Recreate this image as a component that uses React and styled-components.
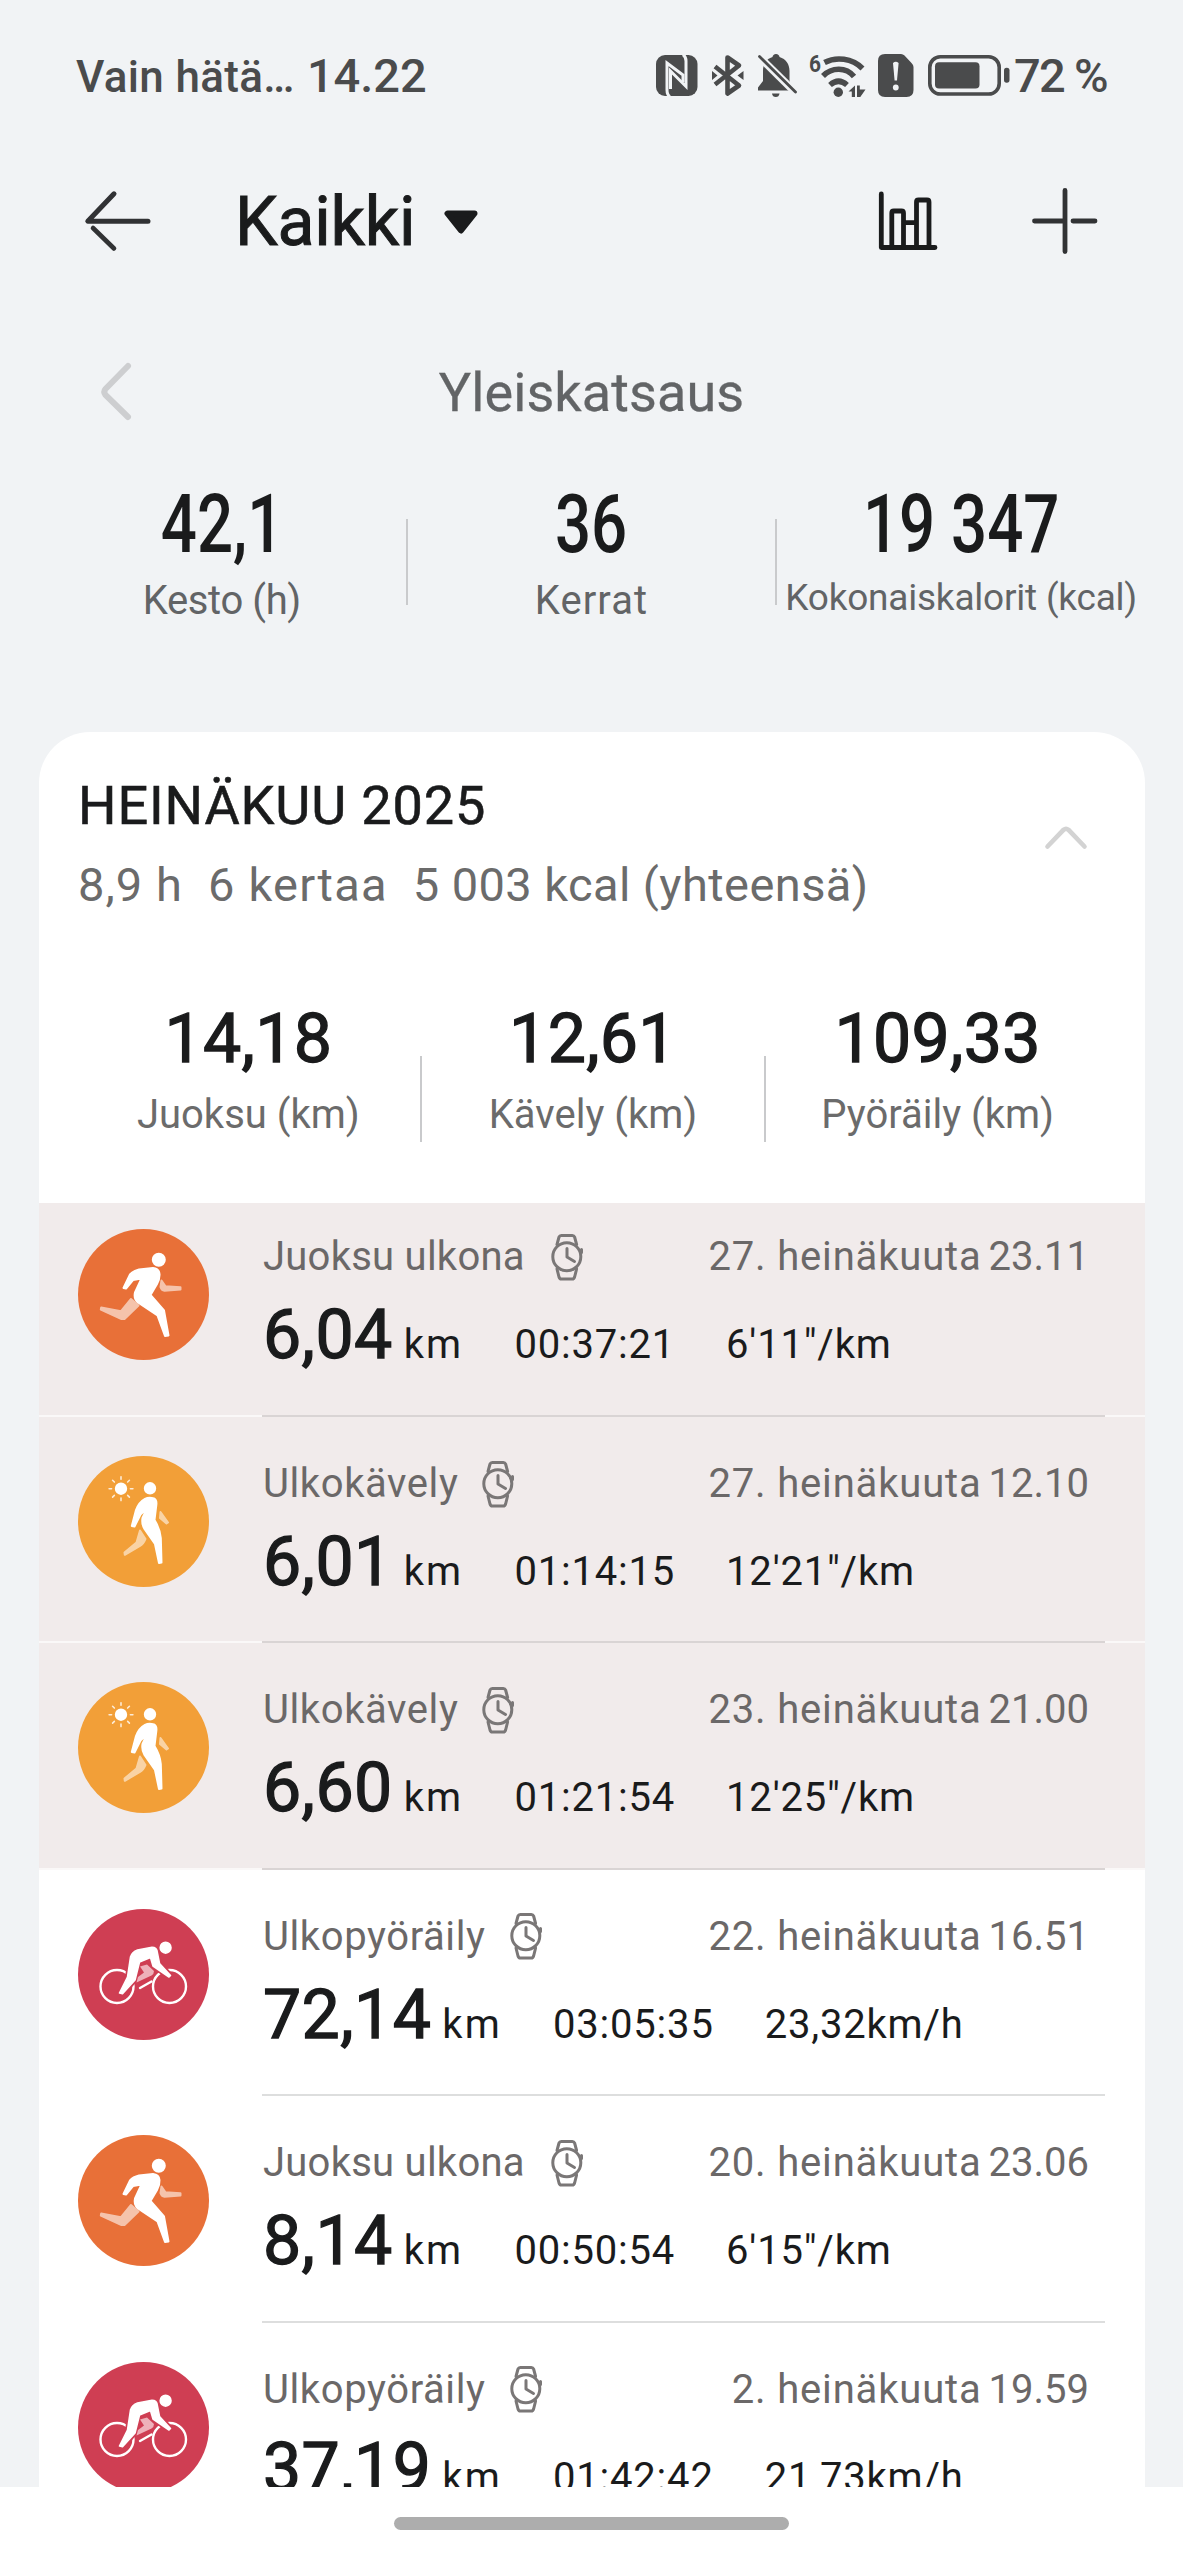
import React from 'react';
import styled, { createGlobalStyle } from 'styled-components';

const GlobalStyle = createGlobalStyle`
  * {
    box-sizing: border-box;
  }
  body {
    margin: 0;
    background: #f1f3f5;
    font-family: Roboto, 'Liberation Sans', sans-serif;
    color: #1a1b1c;
  }
  svg {
    display: block;
    flex-shrink: 0;
    overflow: visible;
  }
`;

const Screen = styled.div`
  width: 1183px;
  height: 2560px;
  display: flex;
  flex-direction: column;
  overflow: hidden;
`;

const Content = styled.main`
  height: 2487px;
  flex-shrink: 0;
  overflow: hidden;
`;

const StatusBar = styled.div`
  height: 151px;
  display: flex;
  align-items: center;
  padding-left: 76px;
  color: #4a4b4c;
  font-weight: 500;
`;

const Carrier = styled.div`
  width: 580px;
  display: flex;
  align-items: baseline;
  gap: 12px;
  font-size: 44px;
  letter-spacing: 0.34px;
`;

const Clock = styled.span`
  font-size: 47px;
  letter-spacing: 0;
`;

const StatusIcons = styled.div`
  display: flex;
  align-items: center;
  gap: 14px;
`;

const BatteryText = styled.span`
  margin-left: -9px;
  font-size: 47px;
  letter-spacing: -1.7px;
  white-space: nowrap;
`;

const AppBar = styled.header`
  height: 139px;
  display: flex;
  align-items: center;
  padding: 0 85px;
`;

const FilterTitle = styled.h1`
  margin: 2px 0 0 84px;
  display: flex;
  align-items: center;
  gap: 29px;
  font-size: 68px;
  font-weight: 400;
  letter-spacing: -0.2px;
  -webkit-text-stroke: 1px currentColor;
`;

const Actions = styled.div`
  margin-left: auto;
  display: flex;
  align-items: center;
  gap: 95px;
`;

const OverviewBar = styled.div`
  height: 204px;
  display: grid;
  grid-template-columns: 1fr auto 1fr;
  align-items: center;
  padding: 0 101px;
  color: #626466;
  font-size: 54px;
  letter-spacing: 0.08px;
  -webkit-text-stroke: 0.3px currentColor;
`;

const Totals = styled.section`
  height: 238px;
  padding: 0 38px;
  display: grid;
  grid-template-columns: 1fr 2px 1fr 2px 1fr;
`;

const Total = styled.div`
  display: flex;
  flex-direction: column;
  align-items: center;
  white-space: nowrap;
`;

const TotalValue = styled.div`
  font-size: 81px;
  font-weight: 500;
  line-height: 62px;
  transform: scaleX(0.785);
`;

const TotalLabel = styled.div`
  margin-top: ${(p) => (p.$compact ? 20 : 23)}px;
  font-size: ${(p) => (p.$compact ? 37 : 40)}px;
  letter-spacing: ${(p) => p.$spacing}px;
  line-height: 44px;
  color: #626466;
`;

const Divider = styled.div`
  height: 86px;
  margin-top: ${(p) => p.$offset}px;
  background: #c9cacc;
`;

const Card = styled.section`
  margin: 0 38px 0 39px;
  border-radius: 51px 51px 0 0;
  background: #fff;
  overflow: hidden;
`;

const CardHead = styled.div`
  display: flex;
  align-items: center;
  justify-content: space-between;
  padding: 42px 58px 0 39px;
`;

const Month = styled.h2`
  margin: 0;
  font-size: 54px;
  font-weight: 400;
  line-height: 64px;
  letter-spacing: 0.88px;
  -webkit-text-stroke: 0.6px currentColor;
`;

const MonthTotals = styled.div`
  margin-top: 17px;
  display: flex;
  gap: 25px;
  font-size: 47px;
  line-height: 60px;
  color: #6b6b6b;
`;

const MonthTotal = styled.span`
  letter-spacing: ${(p) => p.$spacing}px;
`;

const CollapseIcon = styled.svg`
  margin-bottom: 14px;
`;

const Distances = styled.div`
  height: 288px;
  padding: 86px 36px 0 38px;
  display: grid;
  grid-template-columns: 1fr 2px 1fr 2px 1fr;
`;

const DistanceValue = styled.div`
  font-size: 68px;
  line-height: 76px;
  letter-spacing: 0.3px;
  -webkit-text-stroke: 1.3px currentColor;
`;

const DistanceLabel = styled.div`
  margin-top: 14px;
  font-size: 40px;
  line-height: 48px;
  color: #6b6b6b;
`;

const Workout = styled.article`
  height: ${(p) => (p.$first ? 212 : 224.4)}px;
  padding: ${(p) => (p.$first ? 26 : 39)}px 56px 0 39px;
  display: flex;
  align-items: flex-start;
  gap: 54px;
  background: ${(p) => (p.$tinted ? '#f1ebeb' : '#fff')};
`;

const Separator = styled.div`
  height: 2px;
  padding: 0 40px 0 223px;
  background: ${(p) => (p.$tinted ? '#faf8f8' : '#fff')};

  &::after {
    content: '';
    display: block;
    height: 2px;
    background: ${(p) => (p.$tinted ? '#d9d4d4' : '#dddede')};
  }
`;

const WorkoutBody = styled.div`
  flex: 1;
  padding-top: 3px;
`;

const WorkoutTop = styled.div`
  height: 50px;
  display: flex;
  align-items: center;
  font-size: 40px;
  line-height: 50px;
  color: #6b6868;
  white-space: nowrap;
`;

const WorkoutName = styled.span`
  margin-right: ${(p) => p.$gap}px;
  letter-spacing: ${(p) => p.$spacing}px;
`;

const WorkoutDate = styled.span`
  margin-left: auto;
  letter-spacing: 0.83px;
`;

const WorkoutTime = styled.span`
  margin-left: 7px;
`;

const Metrics = styled.div`
  margin-top: 15px;
  display: flex;
  align-items: baseline;
  font-size: 40px;
  line-height: 76px;
  letter-spacing: 0.8px;
  white-space: nowrap;
`;

const Distance = styled.span`
  font-size: 68px;
  letter-spacing: 0.4px;
  -webkit-text-stroke: 1.3px currentColor;
`;

const Unit = styled.span`
  margin-left: 11px;
  letter-spacing: 2.2px;
`;

const Metric = styled.span`
  margin-left: 51px;
`;

const NavBar = styled.div`
  height: 73px;
  display: flex;
  justify-content: center;
  padding-top: 30px;
  background: #fff;
`;

const NavPill = styled.div`
  width: 395px;
  height: 13px;
  border-radius: 7px;
  background: #adadad;
`;

const INK = '#4a4b4c';
const PAGE = '#f1f3f5';

const NfcIcon = () => (
  <svg width="42" height="41" viewBox="0 0 42 41">
    <rect width="41.5" height="41" rx="9" fill={INK} />
    <g fill="none" stroke={PAGE} strokeWidth="3">
      <path d="M14 41.5Q11 40 11 35V8L27 20V27" />
      <path d="M14.5 34V16L30 31.500V6Q30 2 27-.5" />
    </g>
  </svg>
);

const BluetoothIcon = () => (
  <svg width="32" height="41" viewBox="0 0 32 41">
    <path
      d="M3 11.500 27 30.500 15.500 38.500V2.500L27 10.500 3 29.500"
      fill="none"
      stroke={INK}
      strokeWidth="4.600"
      strokeLinejoin="round"
    />
    <path d="M0 16 5.500 20.500 0 25zM31.500 16 25.500 20.500 31.500 25z" fill={INK} />
  </svg>
);

const BellOffIcon = () => (
  <svg width="38" height="43" viewBox="0 0 38 43">
    <path
      d="M18 0c2 0 3.500 1.500 3.500 3C28 5 31.500 10 31.500 17v10l3 9.500H0v-3L5 27V17C5 10 8 5 14.500 3 14.500 1.500 16 0 18 0z"
      fill={INK}
    />
    <path d="M14 39.500h7.500q-.5 3.500-3.700 3.500T14 39.500z" fill={INK} />
    <path d="M-1 .5 40 41" stroke={PAGE} strokeWidth="7.500" />
    <path d="M1.500 2.500 37.500 38" stroke={INK} strokeWidth="2.800" strokeLinecap="round" />
  </svg>
);

const WifiIcon = () => (
  <svg width="54" height="43" viewBox="0 0 54 43">
    <text x="-1" y="17.500" fontSize="24" fontWeight="700" textLength="12" lengthAdjust="spacingAndGlyphs" fill={INK}>
      6
    </text>
    <g fill="none" stroke={INK} strokeWidth="5.600">
      <path d="M14.500 8.500C26 2.500 42 4 52.500 14.500" />
      <path d="M13 22C22 13 36 13 44 22.500" />
      <path d="M20 31Q28.500 23.500 37 31" />
    </g>
    <circle cx="28.300" cy="38.300" r="4.700" fill={INK} />
    <path d="M45 31.500v11.500h-3.200v-5.500h-3.300zM47 31.500h2.800v4H55.500L50.300 43H47z" fill={INK} />
  </svg>
);

const SimAlertIcon = () => (
  <svg width="36" height="43" viewBox="0 0 36 43">
    <path d="M7 0H23q2 0 3.500 1.500L33.500 9Q35.500 11 35.500 13V36q0 7-7 7H7q-7 0-7-7V7Q0 0 7 0z" fill={INK} />
    <path d="M15 9q2.800-2.500 5.600 0L19 26.500h-2.400z" fill={PAGE} />
    <circle cx="17.800" cy="33.500" r="2.900" fill={PAGE} />
  </svg>
);

const BatteryIcon = () => (
  <svg width="81" height="41" viewBox="0 0 81 41">
    <rect x="1.800" y="1.800" width="69.400" height="37.200" rx="10.500" fill="none" stroke={INK} strokeWidth="3.600" />
    <rect x="7" y="7.300" width="44.500" height="26.200" rx="4" fill={INK} />
    <rect x="76" y="12.700" width="5.500" height="15" rx="2.600" fill={INK} />
  </svg>
);

const BackIcon = () => (
  <svg width="66" height="60" viewBox="0 0 66 60" fill="none" stroke="#313234" strokeWidth="5" strokeLinecap="round">
    <path d="M29 2.800 2.800 30.200H63" strokeLinejoin="round" />
    <path d="M8 37 29 57.500" strokeWidth="4.600" />
  </svg>
);

const DropdownIcon = () => (
  <svg width="34" height="24" viewBox="0 0 34 24">
    <path d="M3.500 3.500h27L17 20.500z" fill="#1a1b1c" stroke="#1a1b1c" strokeWidth="6" strokeLinejoin="round" />
  </svg>
);

const ChartIcon = () => (
  <svg
    width="58"
    height="58"
    viewBox="0 0 58 58"
    fill="none"
    stroke="#1a1b1c"
    strokeWidth="4.800"
    strokeLinecap="round"
    strokeLinejoin="round"
  >
    <path d="M2.300 2V55.500H56" />
    <path d="M12.800 55V21q0-2 2-2h7.700q2 0 2 2V55M24.500 30.700H37.500M37.500 55V10q0-2 2-2H48q2 0 2 2V55" />
  </svg>
);

const PlusIcon = () => (
  <svg width="66" height="66" viewBox="0 0 66 66" fill="none" stroke="#313234" strokeWidth="4.800" strokeLinecap="round">
    <path d="M33 2.500V63.500M2.500 33H31M41 33H63" />
  </svg>
);

const PreviousIcon = () => (
  <svg width="30" height="57" viewBox="0 0 30 57" fill="none" stroke="#cdced0" strokeWidth="6" strokeLinecap="round">
    <path d="M27 2 4.500 25q-2.500 3 0 6L27 53" />
  </svg>
);

const WatchIcon = () => (
  <svg
    width="32"
    height="47"
    viewBox="0 0 32 47"
    fill="none"
    stroke="#7a7777"
    strokeWidth="3"
    strokeLinecap="round"
    strokeLinejoin="round"
  >
    <circle cx="15.800" cy="22.700" r="14" />
    <path d="M6 10.500 8 3q.6-1.600 2.300-1.600h11Q23 1.400 23.600 3l2 7.500M6 35 8 43q.6 2 2.300 2h11q1.700 0 2.300-2L25.600 35" />
    <path d="M16 14.500v8.500l7.500 4.500M30.500 15.500v3" />
  </svg>
);

const RunGlyph = () => (
  <g fill="#fff" stroke="#fff" strokeWidth="2" strokeLinejoin="round">
    <circle cx="80.800" cy="30.700" r="6" />
    <path d="M45.500 59 52 45.500Q55 42 61 40.500L75 39Q81 39.500 81.500 45 81.800 50 79 55L72.500 66 86 81.500 90.500 106.500 87 107 79.500 86.500 60 73.500Q55.500 69.500 57 63.500L63.500 49.500 55 51 48 59.500z" />
    <g opacity=".58">
      <path d="M83.500 51.500 87.500 57.200 102.500 58.200V60.500L86.500 61.800Q83.500 61.500 82.500 58z" />
      <path d="M53 70 60.500 76.500 46.500 90 43.500 90 22.800 80.500 23.200 78.500 43 82.200z" />
    </g>
  </g>
);

const SUN_RAYS = [0, 45, 90, 135, 180, 225, 270, 315];

const WalkGlyph = () => (
  <g fill="#fff" stroke="#fff" strokeWidth="2" strokeLinejoin="round">
    <circle cx="43" cy="32.700" r="5.200" />
    {SUN_RAYS.map((angle) => (
      <path
        key={angle}
        d="M43 20.800V23.300"
        strokeWidth="1.600"
        strokeLinecap="round"
        opacity=".8"
        transform={`rotate(${angle} 43 32.700)`}
      />
    ))}
    <circle cx="72" cy="32.300" r="5.200" />
    <path d="M53.800 70 58 54Q61 46 67 42.800 71 41 76 42.500 79 44 78.300 49L76.500 64Q82 73 82.800 82L83.500 106.500 81 107 77 88 66.500 73Q63.500 68 64.500 62L69 52.500 62.500 58.500 56.500 70.500z" />
    <g opacity=".55">
      <path d="M82.500 56 90 66.500 88.500 67.500 82 62z" />
      <path d="M62 74.500 67.500 83Q65.500 88 62 90L46.800 98.800 46.500 96.500 58.500 86.500z" />
    </g>
  </g>
);

const RIDER =
  'M52.500 48Q54 43 59.500 41L74 38.300Q78.500 38.500 79 42L81.500 54.500 92.500 66.500 91 68 75 57 72.500 48.500 61.500 53 57 71 44.500 84.800 41.500 84 49.500 68z';

const CycleGlyph = () => (
  <g fill="#fff" stroke="#fff" strokeWidth="1.600" strokeLinejoin="round">
    <g fill="none" strokeWidth="2.400">
      <circle cx="39" cy="77.500" r="16.500" />
      <circle cx="91.500" cy="77.500" r="16.500" />
      <path d="M62 79 73.500 72.500" strokeLinecap="round" />
    </g>
    <path d={RIDER} stroke="#cf3e53" strokeWidth="5" />
    <path d="M62 57.500 69 55.500 76 62Q76 65 73.500 66.500L58.500 73.500 60 68 66 63.500z" fill="#eeb1ba" stroke="none" />
    <circle cx="87.600" cy="38.700" r="5.400" />
    <path d={RIDER} />
  </g>
);

const sports = {
  run: { name: 'Juoksu ulkona', color: '#e87038', Glyph: RunGlyph, spacing: 0.25, gap: 26 },
  walk: { name: 'Ulkokävely', color: '#f29f38', Glyph: WalkGlyph, spacing: 0.6, gap: 24 },
  cycle: { name: 'Ulkopyöräily', color: '#cf3e53', Glyph: CycleGlyph, spacing: 0.6, gap: 24 },
};

const workouts = [
  { sport: 'run', date: '27. heinäkuuta', time: '23.11', km: '6,04', duration: '00:37:21', pace: '6\'11"/km', tinted: true },
  { sport: 'walk', date: '27. heinäkuuta', time: '12.10', km: '6,01', duration: '01:14:15', pace: '12\'21"/km', tinted: true },
  { sport: 'walk', date: '23. heinäkuuta', time: '21.00', km: '6,60', duration: '01:21:54', pace: '12\'25"/km', tinted: true },
  { sport: 'cycle', date: '22. heinäkuuta', time: '16.51', km: '72,14', duration: '03:05:35', pace: '23,32km/h' },
  { sport: 'run', date: '20. heinäkuuta', time: '23.06', km: '8,14', duration: '00:50:54', pace: '6\'15"/km' },
  { sport: 'cycle', date: '2. heinäkuuta', time: '19.59', km: '37,19', duration: '01:42:42', pace: '21,73km/h' },
];

function WorkoutRow({ workout, first }) {
  const { name, color, Glyph, spacing, gap } = sports[workout.sport];
  return (
    <>
      <Workout $first={first} $tinted={workout.tinted}>
        <svg width="131" height="131" viewBox="0 0 131 131">
          <circle cx="65.500" cy="65.500" r="65.500" fill={color} />
          <Glyph />
        </svg>
        <WorkoutBody>
          <WorkoutTop>
            <WorkoutName $spacing={spacing} $gap={gap}>
              {name}
            </WorkoutName>
            <WatchIcon />
            <WorkoutDate>{workout.date}</WorkoutDate>
            <WorkoutTime>{workout.time}</WorkoutTime>
          </WorkoutTop>
          <Metrics>
            <Distance>{workout.km}</Distance>
            <Unit>km</Unit>
            <Metric>{workout.duration}</Metric>
            <Metric>{workout.pace}</Metric>
          </Metrics>
        </WorkoutBody>
      </Workout>
      <Separator $tinted={workout.tinted} />
    </>
  );
}

export default function App() {
  return (
    <>
      <GlobalStyle />
      <Screen>
        <Content>
          <StatusBar>
            <Carrier>
              Vain hätä…
              <Clock>14.22</Clock>
            </Carrier>
            <StatusIcons>
              <NfcIcon />
              <BluetoothIcon />
              <BellOffIcon />
              <WifiIcon />
              <SimAlertIcon />
              <BatteryIcon />
              <BatteryText>72 %</BatteryText>
            </StatusIcons>
          </StatusBar>
          <AppBar>
            <BackIcon />
            <FilterTitle>
              Kaikki
              <DropdownIcon />
            </FilterTitle>
            <Actions>
              <ChartIcon />
              <PlusIcon />
            </Actions>
          </AppBar>
          <OverviewBar>
            <PreviousIcon />
            <span>Yleiskatsaus</span>
          </OverviewBar>
          <Totals>
            <Total>
              <TotalValue>42,1</TotalValue>
              <TotalLabel $spacing={-0.39}>Kesto (h)</TotalLabel>
            </Total>
            <Divider $offset={25} />
            <Total>
              <TotalValue>36</TotalValue>
              <TotalLabel $spacing={1.1}>Kerrat</TotalLabel>
            </Total>
            <Divider $offset={25} />
            <Total>
              <TotalValue>19 347</TotalValue>
              <TotalLabel $compact $spacing={-0.22}>
                Kokonaiskalorit (kcal)
              </TotalLabel>
            </Total>
          </Totals>
          <Card>
            <CardHead>
              <div>
                <Month>HEINÄKUU 2025</Month>
                <MonthTotals>
                  <MonthTotal $spacing={1.07}>8,9 h</MonthTotal>
                  <MonthTotal $spacing={1.23}>6 kertaa</MonthTotal>
                  <MonthTotal $spacing={0.41}>5 003 kcal (yhteensä)</MonthTotal>
                </MonthTotals>
              </div>
              <CollapseIcon
                width="42"
                height="23"
                viewBox="0 0 42 23"
                fill="none"
                stroke="#d3d3d3"
                strokeWidth="4.600"
                strokeLinecap="round"
              >
                <path d="M2.500 20.500 18.500 3.800q2.500-2 5 0L39.500 20.500" />
              </CollapseIcon>
            </CardHead>
            <Distances>
              <Total>
                <DistanceValue>14,18</DistanceValue>
                <DistanceLabel>Juoksu (km)</DistanceLabel>
              </Total>
              <Divider $offset={55} />
              <Total>
                <DistanceValue>12,61</DistanceValue>
                <DistanceLabel>Kävely (km)</DistanceLabel>
              </Total>
              <Divider $offset={55} />
              <Total>
                <DistanceValue>109,33</DistanceValue>
                <DistanceLabel>Pyöräily (km)</DistanceLabel>
              </Total>
            </Distances>
            {workouts.map((workout, i) => (
              <WorkoutRow key={workout.date + workout.time} workout={workout} first={i === 0} />
            ))}
          </Card>
        </Content>
        <NavBar>
          <NavPill />
        </NavBar>
      </Screen>
    </>
  );
}
